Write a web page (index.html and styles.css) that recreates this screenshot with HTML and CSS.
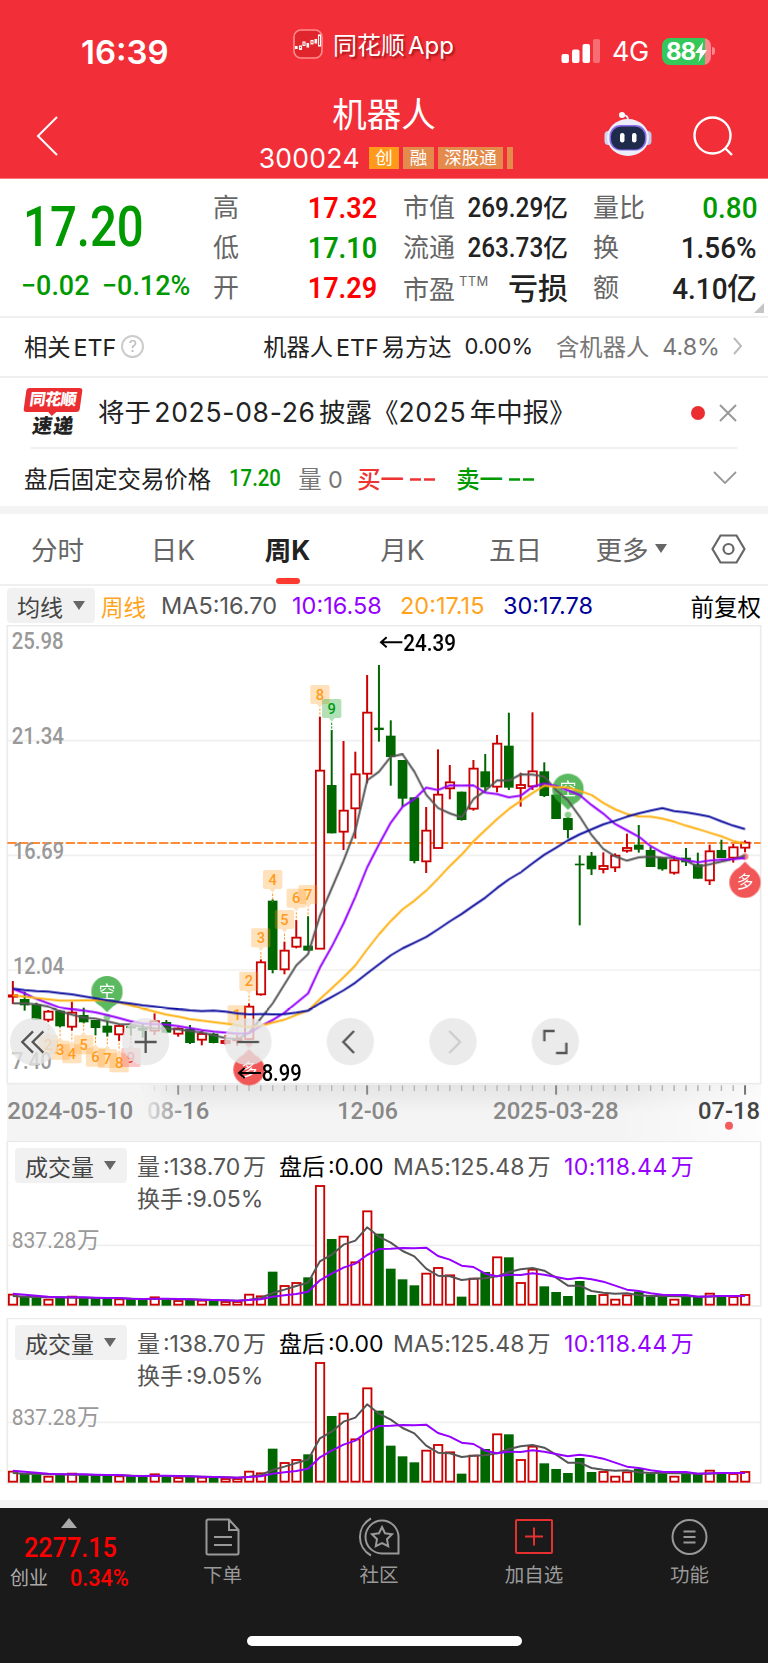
FILE: index.html
```
<!DOCTYPE html>
<html lang="zh-CN">
<head>
    <meta charset="UTF-8">
    <meta name="viewport" content="width=device-width, initial-scale=1.0">
    <title>机器人 300024</title>
    <link rel="stylesheet" href="styles.css">
</head>
<body>

    <header class="top">
        <div class="status">
            <span class="time">16:39</span>
            <div class="app-name">
                <svg width="30" height="30" viewBox="0 0 30 30">
                    <rect x="1" y="1" width="28" height="28" rx="7" fill="#e0262c" stroke="#ff8d8d" stroke-width="1.6"/>
                    <g fill="#fff"><rect x="2" y="17" width="2.6" height="3"/><rect x="13.5" y="14" width="2.6" height="4.5"/><rect x="21.5" y="10" width="2.6" height="4.5"/></g>
                    <g fill="none" stroke="#fff" stroke-width="1.1"><rect x="6.5" y="17" width="2" height="3.4"/><rect x="10" y="13" width="2" height="3.4"/><rect x="18" y="11.5" width="2" height="3.4"/><rect x="25.5" y="6" width="2" height="11"/></g>
                </svg>
                <span>同花顺App</span>
            </div>
            <div class="signals">
                <svg width="40" height="25" viewBox="0 0 40 25" fill="#fff">
                    <rect x="0.5" y="15" width="7.5" height="9" rx="2"/>
                    <rect x="11" y="10.5" width="7.5" height="13.5" rx="2"/>
                    <rect x="21.5" y="5" width="7.5" height="19" rx="2"/>
                    <rect x="32" y="0" width="7" height="24" rx="2" opacity="0.3"/>
                </svg>
                <span class="net">4G</span>
                <div class="battery">
                    <span>88</span>
                    <svg width="12" height="20" viewBox="0 0 12 20"><path d="M8 0L0 11h5L3.5 20 12 8H7z" fill="#fff"/></svg>
                </div>
            </div>
        </div>
        <div class="title-bar">
            <svg class="back" width="22" height="40" viewBox="0 0 22 40"><path d="M21 1L2 20l19 19" fill="none" stroke="#fff" stroke-width="2"/></svg>
            <div class="stock">
                <h1>机器人</h1>
                <div class="code-row">
                    <span class="code">300024</span>
                    <span class="tag hot">创</span>
                    <span class="tag">融</span>
                    <span class="tag">深股通</span>
                    <span class="tag cut"></span>
                </div>
            </div>
            <svg class="robot" width="48" height="46" viewBox="0 0 48 46">
                <path d="M24 10c0-5-1-5-5-6" fill="none" stroke="#e6e8f8" stroke-width="2"/>
                <circle cx="18" cy="4" r="3" fill="#fff"/>
                <rect x="0.5" y="20" width="8" height="14" rx="4" fill="#d0d4ee"/>
                <rect x="39.5" y="20" width="8" height="14" rx="4" fill="#c3c8ea"/>
                <ellipse cx="24" cy="26.500" rx="21" ry="18.500" fill="#eceefa"/>
                <rect x="5.500" y="14" width="37" height="25.500" rx="11" fill="#8a6cf0"/>
                <rect x="7" y="15.500" width="34" height="23" rx="10" fill="#1f2b4a"/>
                <rect x="16" y="22" width="4.500" height="9.500" rx="2.200" fill="#fff"/>
                <rect x="28" y="22" width="4.500" height="9.500" rx="2.200" fill="#fff"/>
            </svg>
            <svg class="search" width="40" height="40" viewBox="0 0 40 40" fill="none" stroke="#fff" stroke-width="2.4"><circle cx="19.500" cy="19.500" r="18"/><path d="M32 32l7 7"/></svg>
        </div>
    </header>

    <section class="quote">
        <div class="price-col down">
            <div class="price"><b class="num">17.20</b></div>
            <div class="change"><b class="num">−0.02</b><b class="num">−0.12%</b></div>
        </div>
        <dl class="col-a">
            <dt>高</dt><dd class="up"><b class="num">17.32</b></dd>
            <dt>低</dt><dd class="down"><b class="num">17.10</b></dd>
            <dt>开</dt><dd class="up"><b class="num">17.29</b></dd>
        </dl>
        <dl class="col-b">
            <dt>市值</dt><dd><b class="num">269.29</b>亿</dd>
            <dt>流通</dt><dd><b class="num">263.73</b>亿</dd>
            <dt class="low">市盈<sup>TTM</sup></dt><dd class="big">亏损</dd>
        </dl>
        <dl class="col-c">
            <dt>量比</dt><dd class="down"><b class="num">0.80</b></dd>
            <dt>换</dt><dd><b class="num">1.56%</b></dd>
            <dt>额</dt><dd class="big"><b class="num">4.10</b>亿</dd>
        </dl>
        <i class="corner"></i>
    </section>

    <section class="etf">
        <span>相关ETF</span>
        <i class="help">?</i>
        <span class="etf-name">机器人ETF易方达</span>
        <span class="etf-rate">0.00%</span>
        <span class="muted">含机器人</span>
        <span class="muted etf-share">4.8%</span>
        <svg width="10" height="18" viewBox="0 0 10 18"><path d="M1 1l7 8-7 8" fill="none" stroke="#bbb" stroke-width="2"/></svg>
    </section>

    <section class="news">
        <div class="badge"><span class="badge-top">同花顺</span><span class="badge-bottom">速递</span></div>
        <span class="news-text">将于<em>2025-08-26</em>披露《<em>2025</em>年中报》</span>
        <i class="dot"></i>
        <svg width="18" height="18" viewBox="0 0 18 18"><path d="M1 1l16 16M17 1L1 17" stroke="#999" stroke-width="2"/></svg>
    </section>

    <section class="after">
        <span>盘后固定交易价格</span>
        <span class="down after-price"><b class="num">17.20</b></span>
        <span class="muted after-vol">量 0</span>
        <span class="red after-buy">买一 <svg width="26" height="3"><path d="M0 1.500h11M14 1.500h11" stroke="#ee3333" stroke-width="2.400"/></svg></span>
        <span class="down after-sell">卖一 <svg width="26" height="3"><path d="M0 1.500h11M14 1.500h11" stroke="#009900" stroke-width="2.400"/></svg></span>
        <svg class="arrow" width="24" height="13" viewBox="0 0 24 13"><path d="M1 1l11 11L23 1" fill="none" stroke="#999" stroke-width="1.800"/></svg>
    </section>

    <nav class="tabs">
        <a>分时</a>
        <a>日K</a>
        <a class="active">周K</a>
        <a>月K</a>
        <a>五日</a>
        <a>更多<i class="tri"></i></a>
        <a><svg width="35" height="30" viewBox="0 0 35 30" fill="none" stroke="#666" stroke-width="2.200"><path d="M9.500 1.500h16L33.500 15l-8 13.500h-16L1.500 15z"/><circle cx="17.500" cy="15" r="5"/></svg></a>
    </nav>

    <section class="ma-row">
        <span class="picker">均线<i class="tri"></i></span>
        <span class="orange ma-week">周线</span>
        <span class="ma5">MA5:16.70</span>
        <span class="purple ma10">10:16.58</span>
        <span class="orange ma20">20:17.15</span>
        <span class="navy ma30">30:17.78</span>
        <span class="adjust">前复权</span>
    </section>

    <!-- charts are drawn in a 3x coordinate system -->
    <svg id="kline" class="kline" viewBox="0 0 2304 1548"></svg>

    <section class="volume">
        <svg class="vol-chart" viewBox="0 0 2304 532"></svg>
        <div class="vol-head">
            <span class="picker">成交量<i class="tri"></i></span>
            <div class="vol-info">
                <div><span class="v1">量:138.70万</span><span class="v2">盘后:0.00</span><span class="v3">MA5:125.48万</span><span class="v4 purple">10:118.44万</span></div>
                <div>换手:9.05%</div>
            </div>
        </div>
    </section>
    <section class="volume">
        <svg class="vol-chart" viewBox="0 0 2304 532"></svg>
        <div class="vol-head">
            <span class="picker">成交量<i class="tri"></i></span>
            <div class="vol-info">
                <div><span class="v1">量:138.70万</span><span class="v2">盘后:0.00</span><span class="v3">MA5:125.48万</span><span class="v4 purple">10:118.44万</span></div>
                <div>换手:9.05%</div>
            </div>
        </div>
    </section>

    <footer class="bottom">
        <div class="menu">
            <div class="index">
                <i class="tri-up"></i>
                <div class="index-value"><b class="num">2277.15</b></div>
                <div class="index-row"><span>创业</span><b class="num">0.34%</b></div>
            </div>
            <div class="item">
                <svg width="36" height="38" viewBox="0 0 36 38" fill="none" stroke="#999" stroke-width="2"><path d="M3 1.500h21l9.500 10.500v23a1.500 1.500 0 0 1-1.500 1.500H3A1.500 1.500 0 0 1 1.500 35V3A1.500 1.500 0 0 1 3 1.500zM24 1.500V12h9.500M9 19h18M9 27h18"/></svg>
                <span>下单</span>
            </div>
            <div class="item">
                <svg width="42" height="40" viewBox="0 0 42 40" fill="none" stroke="#999" stroke-width="2"><path d="M13 1.500a21 21 0 0 0 0 37M24 3.500a16.500 16.500 0 0 0 0 33h16.500V20A16.500 16.500 0 0 0 24 3.500z"/><path d="M24 10l3 6.300 7 1-5 4.900 1.200 6.900L24 26l-6.200 3.100 1.200-6.900-5-4.900 7-1z"/></svg>
                <span>社区</span>
            </div>
            <div class="item">
                <svg width="38" height="36" viewBox="0 0 38 36" fill="none" stroke="#e53030" stroke-width="2"><rect x="1" y="1" width="36" height="33" rx="1"/><path d="M10 17.500h18M19 8.500v18"/></svg>
                <span>加自选</span>
            </div>
            <div class="item">
                <svg width="37" height="37" viewBox="0 0 37 37" fill="none" stroke="#999" stroke-width="2"><circle cx="18.500" cy="18.500" r="17"/><path d="M12.500 13h12M12.500 18.500h12M12.500 24h12"/></svg>
                <span>功能</span>
            </div>
        </div>
        <div class="home"></div>
    </footer>

    <script src="chart.js"></script>
</body>
</html>
```
FILE: styles.css
```
* {
    box-sizing: border-box;
}
body {
    margin: 0;
    width: 768px;
    background: #fff;
    color: #222;
    font-family: Inter, "Noto Sans CJK SC", sans-serif;
    text-autospace: normal;
}
i, em {
    font-style: normal;
}
svg {
    display: block;
    flex: none;
}
b {
    font-weight: 500;
}
/* narrow digits */
.num {
    display: inline-block;
    font-family: Roboto, sans-serif;
    transform: scaleX(0.9);
    transform-origin: right center;
}
.up { color: #ff0000; }
.down { color: #009900; }
.red { color: #ee3333; }
.muted { color: #777; }
.orange { color: #ffa41c; }
.purple { color: #9500ff; }
.navy { color: #000099; }

.top {
    height: 179px;
    background: #f22f38;
    color: #fff;
    border-bottom: 1px solid #f6787d;
}
.status {
    height: 91px;
    padding-top: 12px;
    display: flex;
    align-items: center;
}
.time {
    width: 292px;
    padding-left: 81px;
    font-size: 33px;
    font-weight: 600;
}
.app-name {
    width: 188px;
    padding-left: 1px;
    margin-top: -16px;
    display: flex;
    align-items: center;
    gap: 10px;
    font-size: 24px;
    white-space: nowrap;
    text-shadow: 2px 2px 2px rgba(90, 0, 0, 0.5);
}
.signals {
    padding-left: 81px;
    display: flex;
    align-items: center;
}
.net {
    margin-left: 11px;
    width: 50px;
    font-size: 27px;
    letter-spacing: -0.5px;
}
.battery {
    position: relative;
    width: 49px;
    height: 27px;
    border-radius: 8px;
    background: linear-gradient(to right, #34c759 88%, #f9878b 88%);
    display: flex;
    align-items: center;
    justify-content: center;
    font-size: 24px;
    font-weight: 700;
    letter-spacing: -1.2px;
}
.battery::after {
    content: "";
    position: absolute;
    right: -4px;
    top: 9px;
    width: 3px;
    height: 8px;
    border-radius: 0 3px 3px 0;
    background: #f9878b;
}
.title-bar {
    height: 87px;
    display: flex;
}
.back {
    margin: 25px 0 0 36px;
}
.stock {
    width: 520px;
    margin-left: 66px;
    text-align: center;
}
.stock h1 {
    margin: 0;
    height: 50px;
    line-height: 48px;
    font-size: 34.5px;
    font-weight: 400;
}
.code-row {
    display: flex;
    gap: 4px;
    justify-content: center;
    align-items: center;
    height: 34px;
    padding-left: 4px;
}
.code {
    font-size: 26.5px;
    margin-right: 5px;
    letter-spacing: 0.3px;
}
.tag {
    height: 22px;
    line-height: 21px;
    padding: 0 6.5px;
    font-size: 17.5px;
    background: #e48a4a;
}
.tag.hot {
    background: #ff9a1a;
}
.tag.cut {
    width: 6px;
    padding: 0;
}
.robot {
    margin: 20px 0 0 -40px;
}
.search {
    margin: 25px 0 0 41px;
}

.quote {
    height: 139px;
    display: flex;
    padding-top: 9px;
    position: relative;
    border-bottom: 2px solid #f0f0f0;
}
.price-col {
    width: 213px;
}
.price-col .num {
    transform-origin: left center;
}
.price {
    height: 76px;
    line-height: 76px;
    padding-left: 23px;
    font-size: 55px;
}
.price .num {
    transform: scaleX(0.86);
}
.change {
    height: 40px;
    line-height: 42px;
    padding-left: 21px;
    font-size: 28px;
    white-space: nowrap;
}
.change .num {
    width: 81px;
    transform: scaleX(0.96);
}
.quote dl {
    margin: 0;
    display: grid;
    grid-template-columns: auto 1fr;
    grid-auto-rows: 40px;
    line-height: 40px;
}
.quote dt {
    font-size: 26px;
    color: #666;
    white-space: nowrap;
}
.quote dd {
    margin: 0;
    font-size: 25px;
    font-weight: 500;
    text-align: right;
    white-space: nowrap;
}
.quote dd .num {
    font-size: 30px;
}
.quote .col-a {
    width: 164px;
}
.quote .col-a .num {
    font-weight: 600;
}
.quote .col-b {
    width: 165px;
    margin-left: 26px;
}
.quote .col-b .num {
    font-size: 27px;
    margin-left: -10px;
}
.quote .col-c {
    width: 164px;
    margin-left: 25px;
}
.quote .col-c .num {
    transform: scaleX(0.93);
}
.quote dd.big {
    font-size: 30px;
}
.quote dt.low {
    position: relative;
    padding-top: 2px;
}
/* hangs over the gap so that it does not widen the label column */
.quote sup {
    position: absolute;
    left: 56px;
    top: 5px;
    font-size: 13px;
    line-height: 16px;
    letter-spacing: 0.4px;
}
.corner {
    position: absolute;
    right: 4px;
    bottom: 3px;
    border-left: 10px solid transparent;
    border-bottom: 10px solid #c4c4c4;
}

.etf {
    height: 60px;
    display: flex;
    align-items: center;
    padding: 0 25px 2px 24px;
    font-size: 23.3px;
    border-bottom: 2px solid #f0f0f0;
    white-space: nowrap;
}
.help {
    width: 23px;
    height: 23px;
    margin-left: 5px;
    border: 2px solid #ccc;
    border-radius: 50%;
    color: #bbb;
    font-size: 16px;
    line-height: 19px;
    text-align: center;
}
.etf-name {
    margin-left: auto;
}
.etf-rate {
    margin: 0 23px 0 13px;
    font-size: 22px;
}
.etf-share {
    margin: 0 13px 0 13px;
}

.news {
    height: 71px;
    display: flex;
    align-items: center;
    margin: 0 31px;
    border-bottom: 2px solid #f0f0f0;
}
.badge {
    margin-left: -7px;
    width: 59px;
    height: 50px;
    text-align: center;
    white-space: nowrap;
}
.badge span {
    display: block;
    font-weight: 900;
    transform: skewX(-8deg);
}
.badge-top {
    width: 56px;
    height: 24px;
    margin-left: 1px;
    line-height: 23px;
    border-radius: 3px;
    background: #ea2e32;
    color: #fff;
    font-size: 16px;
    letter-spacing: -0.5px;
}
.badge-top::after {
    content: "";
    position: absolute;
    left: 25px;
    top: 24px;
    border: 4px solid transparent;
    border-top-color: #ea2e32;
    border-bottom: 0;
}
.badge-bottom {
    height: 26px;
    line-height: 28px;
    font-size: 20px;
    letter-spacing: 1px;
}
.news-text {
    margin: -4px 0 0 15px;
    font-size: 26.5px;
    white-space: nowrap;
}
.news-text em {
    letter-spacing: 0.7px;
}
.dot {
    width: 14px;
    height: 14px;
    margin: 0 14px 0 auto;
    border-radius: 50%;
    background: #ea2e32;
}

.after {
    height: 65px;
    display: flex;
    align-items: center;
    padding: 0 31px 0 24px;
    font-size: 23.4px;
    border-bottom: 8px solid #f4f4f4;
    white-space: nowrap;
}
.after span svg {
    display: inline-block;
    vertical-align: 7px;
}
.after-price {
    width: 51px;
    margin-left: 18px;
}
.after-price .num {
    transform: scaleX(0.87);
    transform-origin: left center;
}
.after-vol { width: 59px; margin-left: 18px; }
.after-buy { width: 99px; font-weight: 500; }
.after-sell { font-weight: 500; }
.arrow { margin-left: auto; }

.tabs {
    height: 72px;
    display: grid;
    grid-template-columns: 115px 116px 113px 117px 109px 122px 1fr;
    border-bottom: 2px solid #f0f0f0;
    text-autospace: no-autospace;
}
.tabs a {
    position: relative;
    display: flex;
    align-items: center;
    justify-content: center;
    padding-bottom: 1px;
    font-size: 26.5px;
    color: #666;
}
.tabs a:last-child {
    padding-right: 4px;
}
.tabs .active {
    color: #222;
    font-weight: 700;
}
.active::after {
    content: "";
    position: absolute;
    bottom: 0;
    width: 24px;
    height: 6px;
    border-radius: 3px;
    background: #ff3b30;
}
.tri {
    margin-left: 6px;
    border: 6px solid transparent;
    border-top: 9px solid #666;
    border-bottom: 0;
}

.ma-row {
    height: 39px;
    display: flex;
    align-items: center;
    padding: 0 7px;
    font-size: 23.5px;
    white-space: nowrap;
}
.picker {
    flex: none;
    width: 88px;
    height: 35px;
    padding-left: 10px;
    display: flex;
    align-items: center;
    border-radius: 4px;
    background: #f1f1f1;
    color: #444;
    font-size: 23px;
}
.picker .tri {
    margin-left: 10px;
}
.ma-week { width: 60px; margin-left: 6px; font-size: 22.5px; }
.ma5 { width: 131px; color: #555; }
.ma10 { width: 108px; }
.ma20 { width: 103px; }
.adjust { margin-left: auto; color: #000; }

.kline {
    width: 768px;
    height: 516px;
}
.kline text, .vol-chart text {
    font-family: Roboto, "Noto Sans CJK SC", sans-serif;
    text-autospace: no-autospace;
}

.volume {
    position: relative;
    height: 177px;
}
.vol-chart {
    width: 768px;
    height: 177.333px;
}
.vol-head {
    position: absolute;
    top: 7px;
    left: 15px;
    display: flex;
}
.vol-head .picker {
    width: 112px;
}
.vol-info {
    margin: 3px 0 0 10px;
    font-size: 23px;
    line-height: 32px;
    color: #555;
    white-space: nowrap;
}
.vol-info span {
    display: inline-block;
}
.v1 { width: 142px; }
.v2 { width: 114px; color: #000; }
.v3 { width: 171px; letter-spacing: 0.2px; }
.v4 { letter-spacing: 0.5px; }

.bottom {
    margin-top: 5px;
    height: 163px;
    border-top: 8px solid #f4f4f4;
    background: #1a1a1a;
}
.menu {
    display: grid;
    grid-template-columns: 146px 153px 160px 150px 161px;
    height: 128px;
}
.item {
    display: flex;
    flex-direction: column;
    align-items: center;
    color: #999;
    font-size: 19.5px;
}
.item svg {
    height: 40px;
    margin: 9px 0 2px;
}
.index {
    color: #ff0000;
}
.tri-up {
    display: block;
    width: 0;
    margin: 10px 0 0 61px;
    border: 8.5px solid transparent;
    border-bottom: 10px solid #aaa;
    border-top: 0;
}
.index .num {
    transform-origin: left center;
}
.index-value {
    padding-left: 24px;
    font-size: 28px;
    line-height: 39px;
}
.index-row {
    display: flex;
    gap: 22px;
    padding-left: 10px;
    font-size: 24px;
    line-height: 22px;
}
.index-row span {
    color: #aaa;
    font-size: 19px;
    line-height: 24px;
}
.home {
    width: 275px;
    height: 10px;
    margin-left: 247px;
    border-radius: 5px;
    background: #fff;
}
```
FILE: chart.js
```
const NS = "http://www.w3.org/2000/svg";
const RED = "#cc0000";
const GREEN = "#006600";
const px = i => 38.5 + 35.43 * i;

// color, high, body top, body bottom, low
const candles = [
    ["r", 1083, 1126, 1130, 1152], ["g", 1115, 1137, 1156, 1172], ["g", 1148, 1153, 1199, 1200],
    ["r", 1170, 1175, 1199, 1206], ["g", 1170, 1172, 1219, 1222], ["r", 1145, 1178, 1220, 1232],
    ["g", 1163, 1185, 1207, 1210], ["g", 1200, 1200, 1224, 1246], ["g", 1203, 1217, 1238, 1250],
    ["r", 1213, 1218, 1243, 1263], ["g", 1215, 1219, 1225, 1247], ["g", 1212, 1224, 1232, 1253],
    ["r", 1180, 1204, 1232, 1245], ["g", 1200, 1206, 1238, 1240], ["r", 1222, 1226, 1241, 1250],
    ["g", 1215, 1226, 1269, 1272], ["r", 1232, 1242, 1259, 1276], ["g", 1238, 1241, 1269, 1270],
    ["r", 1245, 1263, 1269, 1274], ["r", 1245, 1257, 1261, 1277], ["r", 1150, 1160, 1257, 1260],
    ["r", 1018, 1027, 1123, 1127], ["g", 838, 842, 1050, 1060], ["r", 965, 992, 1048, 1063],
    ["r", 900, 953, 980, 985], ["g", 888, 977, 992, 992], ["r", 290, 452, 986, 986],
    ["g", 330, 495, 640, 640], ["r", 363, 572, 635, 690], ["r", 395, 463, 565, 656],
    ["r", 165, 278, 461, 490], ["g", 135, 323, 330, 365], ["g", 301, 347, 411, 497],
    ["g", 420, 420, 536, 560], ["g", 532, 532, 723, 730], ["r", 561, 632, 724, 759],
    ["r", 388, 524, 684, 686], ["r", 435, 487, 505, 538], ["g", 515, 515, 600, 602],
    ["r", 420, 446, 566, 572], ["g", 402, 454, 502, 515], ["r", 345, 371, 500, 517],
    ["g", 278, 377, 503, 510], ["r", 458, 495, 504, 560], ["r", 277, 454, 499, 510],
    ["g", 427, 454, 528, 531], ["g", 524, 524, 597, 597], ["g", 592, 594, 630, 655],
    ["g", 706, 731, 736, 916], ["g", 696, 707, 748, 765], ["r", 697, 738, 747, 760],
    ["r", 700, 707, 742, 756], ["r", 641, 684, 692, 698], ["g", 615, 674, 689, 698],
    ["g", 680, 690, 741, 741], ["g", 713, 713, 748, 752], ["r", 708, 721, 758, 764],
    ["g", 684, 713, 727, 738], ["g", 698, 733, 776, 776], ["r", 674, 694, 781, 795],
    ["g", 659, 690, 714, 714], ["r", 672, 682, 713, 728], ["r", 661, 668, 683, 697]
];
const ma = {
    "#555555": [1150,1150,1153,1160,1174,1184,1193,1196,1204,1212,1213,1221,1225,1226,1228,1233,1238,1246,1254,1258,1238,1195,1150,1093,1036,1002,887,805,722,630,481,455,410,403,455,524,564,580,592,537,512,481,482,463,464,470,510,541,590,645,687,709,722,712,710,713,714,722,740,733,725,717,707],
    "#9500ff": [1107,1120,1137,1150,1163,1168,1172,1177,1185,1194,1204,1211,1212,1214,1218,1224,1230,1235,1238,1241,1240,1218,1200,1178,1149,1120,1043,980,910,830,742,673,608,560,537,503,510,496,497,496,518,522,532,527,500,491,498,511,525,555,581,612,631,650,678,698,712,720,727,722,719,717,714],
    "#ffb010": [1126,1130,1134,1138,1142,1142,1141,1141,1142,1148,1156,1166,1175,1184,1190,1197,1202,1206,1211,1216,1221,1217,1208,1199,1185,1172,1137,1105,1072,1036,988,943,903,868,842,812,776,738,704,664,630,597,567,543,519,497,501,503,513,525,549,568,582,589,590,596,605,617,627,638,649,663,671],
    "#1010a0": [1106,1110,1113,1115,1119,1123,1129,1135,1141,1146,1151,1156,1160,1164,1168,1171,1173,1172,1175,1180,1183,1182,1183,1182,1178,1172,1150,1131,1111,1088,1060,1033,1006,985,968,951,928,904,882,857,833,804,778,757,730,704,683,661,643,628,613,602,590,580,572,564,573,577,583,590,604,617,627]
};
// candle, label, top of the box; up = pointer on the upper side
const marks = [
    [3, 2, 1245, "up"], [4, 3, 1262, "up"], [5, 4, 1273, "up"], [6, 5, 1246, "up"],
    [7, 6, 1283, "up"], [8, 7, 1287, "up"], [9, 8, 1300, "up"], [10, 9, 1284, "up red"],
    [19, 1, 1156], [20, 2, 1055], [21, 3, 925], [22, 4, 750], [23, 5, 870], [24, 6, 806],
    [25, 7, 795], [26, 8, 195], [27, 9, 237, "green"]
];
const volTops = [491,500,502,506,503,497,503,503,505,505,505,508,499,507,510,509,509,512,513,513,491,496,424,465,456,441,165,326,317,394,241,310,415,447,465,428,411,433,499,443,425,379,381,456,416,468,485,497,452,494,492,506,493,484,499,499,506,498,500,488,499,498,492];
const volMa = {
    "#555555": [497,499,500,501,501,502,502,503,503,504,505,506,506,506,507,507,508,509,510,511,508,503,488,478,467,457,393,373,343,331,291,319,337,362,378,415,436,438,449,445,444,438,425,417,413,421,442,466,466,482,487,490,489,495,497,497,498,497,499,499,497,497,497],
    "#9500ff": [490,493,496,499,501,501,501,502,503,503,505,506,505,505,506,507,508,509,510,511,509,507,499,495,491,484,450,430,412,400,374,356,355,353,354,352,377,388,406,410,430,438,433,434,429,433,440,447,442,447,454,466,478,482,489,493,494,494,499,498,497,497,497]
};

function add(parent, tag, attrs, text) {
    const el = document.createElementNS(NS, tag);
    for (const key in attrs) el.setAttribute(key, attrs[key]);
    if (text !== undefined) el.textContent = text;
    parent.appendChild(el);
    return el;
}
function line(svg, x1, y1, x2, y2, color, width) {
    return add(svg, "line", { x1, y1, x2, y2, stroke: color, "stroke-width": width });
}
function curve(svg, values, color) {
    const points = values.map((v, i) => px(i) + "," + v).join(" ");
    add(svg, "polyline", { points, fill: "none", stroke: color, "stroke-width": 6, "stroke-linejoin": "round" });
}
function label(svg, text, x, y, len, color, size = 70, weight = 500) {
    add(svg, "text", { x, y, textLength: len, lengthAdjust: "spacingAndGlyphs", fill: color, "font-size": size, "font-weight": weight }, text);
}
function bar(svg, i, color, top, bottom) {
    if (color === "g") {
        add(svg, "rect", { x: px(i) - 14.5, y: top, width: 29, height: bottom - top, fill: GREEN });
    } else {
        add(svg, "rect", { x: px(i) - 12, y: top, width: 25, height: bottom - top, fill: "#fff", stroke: RED, "stroke-width": 5.5 });
    }
}
function pin(svg, x, y, text, color, dir) {
    const g = add(svg, "g", { opacity: 0.8 });
    add(g, "circle", { cx: x, cy: y, r: 47, fill: color });
    add(g, "path", { d: `M${x - 26} ${y + 36 * dir}L${x} ${y + 62 * dir}L${x + 26} ${y + 36 * dir}z`, fill: color });
    add(g, "circle", { cx: x, cy: y + 77 * dir, r: 10, fill: color, opacity: 0.7 });
    add(g, "text", { x, y: y + 18, "text-anchor": "middle", fill: "#fff", "font-size": 50 }, text);
}

function drawKline() {
    const svg = document.getElementById("kline");
    const defs = add(svg, "defs", {});
    const fade = add(defs, "linearGradient", { id: "fade", x1: 0, y1: 0, x2: 0, y2: 1 });
    add(fade, "stop", { offset: 0, "stop-color": "#e4e4e4" });
    add(fade, "stop", { offset: 0.5, "stop-color": "#f4f4f4" });
    const side = add(defs, "linearGradient", { id: "side" });
    add(side, "stop", { offset: 0, "stop-color": "#f4f4f4" });
    add(side, "stop", { offset: 1, "stop-color": "#f4f4f4", "stop-opacity": 0 });
    const side2 = add(defs, "linearGradient", { id: "side2" });
    add(side2, "stop", { offset: 0, "stop-color": "#fff", "stop-opacity": 0 });
    add(side2, "stop", { offset: 1, "stop-color": "#fff" });

    add(svg, "rect", { x: 22, y: 2, width: 2260, height: 1374, fill: "none", stroke: "#ebebeb", "stroke-width": 5 });
    [347, 691, 1035].forEach(y => line(svg, 24, y, 2280, y, "#f0f0f0", 5));

    // axis strip
    add(svg, "rect", { x: 21, y: 1379, width: 2262, height: 169, fill: "url(#fade)" });
    for (let i = 11; i < 63; i++) {
        const major = i % 16 === 14;
        line(svg, px(i), 1381, px(i), major ? 1409 : 1398, major ? "#888" : "#b5b5b5", major ? 6 : 4);
    }
    label(svg, "08-16", 441, 1482, 187, "#888");
    add(svg, "rect", { x: 21, y: 1379, width: 400, height: 169, fill: "#f4f4f4" });
    add(svg, "rect", { x: 420, y: 1379, width: 130, height: 169, fill: "url(#side)" });
    add(svg, "rect", { x: 1850, y: 1379, width: 433, height: 169, fill: "url(#side2)", opacity: 0.8 });
    for (let i = 52; i < 63; i++) {
        line(svg, px(i), 1381, px(i), i === 62 ? 1409 : 1398, i === 62 ? "#777" : "#b5b5b5", i === 62 ? 6 : 4);
    }
    label(svg, "2024-05-10", 22, 1482, 378, "#888");
    label(svg, "12-06", 1012, 1482, 182, "#888");
    label(svg, "2025-03-28", 1479, 1482, 377, "#888");
    label(svg, "07-18", 2094, 1482, 186, "#444");
    add(svg, "circle", { cx: 2187, cy: 1502, r: 12, fill: "#f25c5c" });

    // plot, shifted because the data is measured from 5px above the frame
    const g = add(svg, "g", { transform: "translate(0 -15)" });
    line(g, 22, 669, 2282, 669, "#ff8c38", 6).setAttribute("stroke-dasharray", "28 7");
    label(g, "25.98", 35, 87, 156, "#999");
    label(g, "21.34", 35, 373, 157, "#999");
    label(g, "16.69", 39, 717, 153, "#999");
    label(g, "12.04", 39, 1061, 153, "#999");
    label(g, "7.40", 35, 1346, 120, "#999");

    candles.forEach(([color, high, top, bottom, low], i) => {
        line(g, px(i), high, px(i), low, color === "g" ? GREEN : RED, 6);
        bar(g, i, color, top, bottom);
    });

    marks.forEach(([i, n, y, kind = ""]) => {
        let color = "#ff9c20";
        if (kind.includes("red")) color = "#f04040";
        if (kind === "green") color = "#009a10";
        const up = kind.includes("up");
        const x = px(i);
        add(g, "rect", { x: x - 29, y, width: 58, height: 57, rx: 5, fill: color, opacity: 0.3 });
        const base = up ? y : y + 57;
        const s = up ? -1 : 1;
        add(g, "path", { d: `M${x - 9} ${base}L${x} ${base + 11 * s}L${x + 9} ${base}z`, fill: color, opacity: 0.3 });
        line(g, x, base + 14 * s, x, base + 38 * s, color, 3).setAttribute("stroke-dasharray", "7 4");
        add(g, "text", { x, y: y + 44, "text-anchor": "middle", fill: color, "font-size": 44, "font-weight": 500 }, n);
    });
    pin(g, 321, 1115, "空", "#32a838", 1);
    pin(g, 1704, 508, "空", "#32a838", 1);
    pin(g, 747, 1349, "多", "#ee2e2e", -1);
    pin(g, 2235, 787, "多", "#ee2e2e", -1);
    for (const color in ma) curve(g, ma[color], color);

    // zoom and scroll buttons
    const icons = [
        [101, "M-2 -32L-34 0L-2 32M29 -32L-3 0L29 32", "#555"],
        [437, "M-33 0H33M0 -33V33", "#555"],
        [744, "M-33 0H33", "#555"],
        [1051, "M11 -33L-21 0L11 33", "#555"],
        [1359, "M-11 -33L21 0L-11 33", "#ccc"],
        [1666, "M-33 -2V-33H-2M33 2V33H2", "#555"]
    ];
    icons.forEach(([x, d, color]) => {
        add(g, "circle", { cx: x, cy: 1265, r: 71, fill: "#e6e6e6", opacity: 0.78 });
        add(g, "path", { d, transform: `translate(${x} 1266)`, fill: "none", stroke: color, "stroke-width": 7 });
    });

    add(g, "path", { d: "M1207 67H1143M1160 52L1143 67L1160 82", fill: "none", stroke: "#000", "stroke-width": 6 });
    label(g, "24.39", 1210, 92, 158, "#000");
    add(g, "path", { d: "M783 1359H717M734 1344L717 1359L734 1374", fill: "none", stroke: "#000", "stroke-width": 6 });
    label(g, "8.99", 785, 1383, 120, "#000");
}

function drawVolume(svg) {
    const g = add(svg, "g", { transform: "translate(0 -32)" });
    add(g, "rect", { x: 22, y: 33, width: 2260, height: 494, fill: "#fff", stroke: "#ebebeb", "stroke-width": 5 });
    line(g, 24, 345, 2280, 345, "#f0f0f0", 5);
    label(g, "837.28", 35, 354, 194, "#999", 68, 400);
    label(g, "万", 231, 354, 68, "#999", 68, 400);
    candles.forEach(([color], i) => bar(g, i, color, color === "g" ? volTops[i] : volTops[i] + 2, color === "g" ? 526 : 523));
    for (const color in volMa) curve(g, volMa[color], color);
}

drawKline();
document.querySelectorAll(".vol-chart").forEach(drawVolume);
```
